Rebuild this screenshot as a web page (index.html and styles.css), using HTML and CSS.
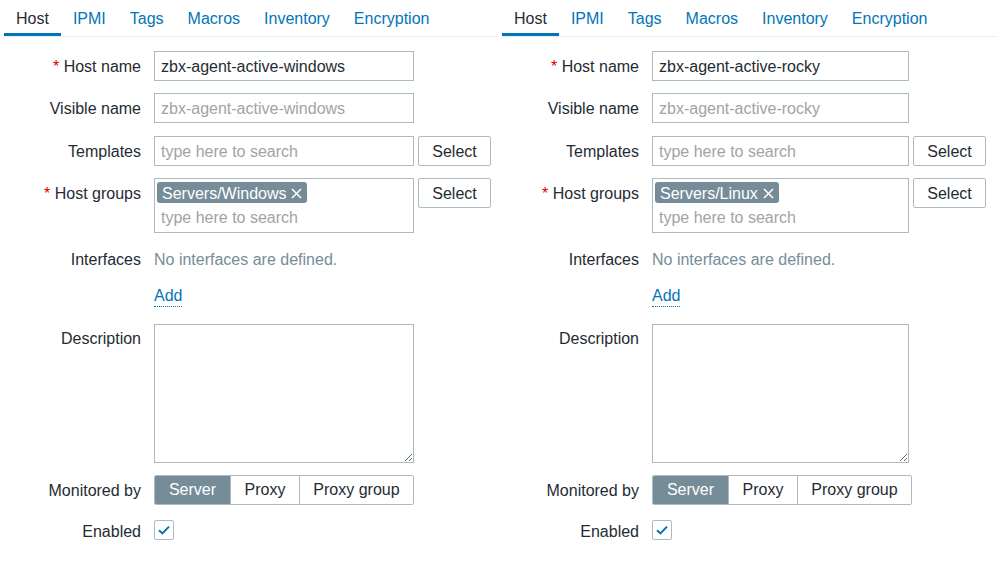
FILE: index.html
```html
<!DOCTYPE html>
<html lang="en">
<head>
<meta charset="utf-8">
<title>Host</title>
<link rel="stylesheet" href="styles.css">
</head>
<body>
<div class="page">
  <section class="panel">
    <nav class="tabs">
      <span class="tab tab--active">Host</span>
      <span class="tab">IPMI</span>
      <span class="tab">Tags</span>
      <span class="tab">Macros</span>
      <span class="tab">Inventory</span>
      <span class="tab">Encryption</span>
    </nav>
    <div class="form">
      <div class="row">
        <label class="label"><span class="req">*</span> Host name</label>
        <div class="field"><div class="input">zbx-agent-active-windows</div></div>
      </div>
      <div class="row">
        <label class="label">Visible name</label>
        <div class="field"><div class="input input--ph">zbx-agent-active-windows</div></div>
      </div>
      <div class="row row--tpl">
        <label class="label">Templates</label>
        <div class="field field--btn"><div class="input input--ph">type here to search</div><button class="btn">Select</button></div>
      </div>
      <div class="row">
        <label class="label"><span class="req">*</span> Host groups</label>
        <div class="field field--btn">
          <div class="multi">
            <span class="tag">Servers/Windows <svg class="tag-x" width="11" height="11" viewBox="0 0 11 11"><path d="M1 1L10 10M10 1L1 10" stroke="#fff" stroke-width="1.5"/></svg></span>
            <span class="multi-ph">type here to search</span>
          </div>
          <button class="btn">Select</button>
        </div>
      </div>
      <div class="row row--text">
        <label class="label">Interfaces</label>
        <div class="field"><span class="muted">No interfaces are defined.</span></div>
      </div>
      <div class="row row--link">
        <span class="label"></span>
        <div class="field"><span class="link">Add</span></div>
      </div>
      <div class="row row--desc">
        <label class="label">Description</label>
        <div class="field"><textarea class="textarea"></textarea></div>
      </div>
      <div class="row">
        <label class="label">Monitored by</label>
        <div class="field"><div class="seg"><span class="seg-item seg-item--on seg-server">Server</span><span class="seg-item seg-proxy">Proxy</span><span class="seg-item seg-group">Proxy group</span></div></div>
      </div>
      <div class="row row--check">
        <label class="label">Enabled</label>
        <div class="field"><span class="check"><svg width="14" height="12" viewBox="0 0 14 12"><path d="M2 6.2L5.4 9.4L12 2.6" fill="none" stroke="#0275b8" stroke-width="2"/></svg></span></div>
      </div>
    </div>
  </section>
  <section class="panel panel--narrow">
    <nav class="tabs">
      <span class="tab tab--active">Host</span>
      <span class="tab">IPMI</span>
      <span class="tab">Tags</span>
      <span class="tab">Macros</span>
      <span class="tab">Inventory</span>
      <span class="tab">Encryption</span>
    </nav>
    <div class="form">
      <div class="row">
        <label class="label"><span class="req">*</span> Host name</label>
        <div class="field"><div class="input">zbx-agent-active-rocky</div></div>
      </div>
      <div class="row">
        <label class="label">Visible name</label>
        <div class="field"><div class="input input--ph">zbx-agent-active-rocky</div></div>
      </div>
      <div class="row row--tpl">
        <label class="label">Templates</label>
        <div class="field field--btn"><div class="input input--ph">type here to search</div><button class="btn">Select</button></div>
      </div>
      <div class="row">
        <label class="label"><span class="req">*</span> Host groups</label>
        <div class="field field--btn">
          <div class="multi">
            <span class="tag">Servers/Linux <svg class="tag-x" width="11" height="11" viewBox="0 0 11 11"><path d="M1 1L10 10M10 1L1 10" stroke="#fff" stroke-width="1.5"/></svg></span>
            <span class="multi-ph">type here to search</span>
          </div>
          <button class="btn">Select</button>
        </div>
      </div>
      <div class="row row--text">
        <label class="label">Interfaces</label>
        <div class="field"><span class="muted">No interfaces are defined.</span></div>
      </div>
      <div class="row row--link">
        <span class="label"></span>
        <div class="field"><span class="link">Add</span></div>
      </div>
      <div class="row row--desc">
        <label class="label">Description</label>
        <div class="field"><textarea class="textarea"></textarea></div>
      </div>
      <div class="row">
        <label class="label">Monitored by</label>
        <div class="field"><div class="seg"><span class="seg-item seg-item--on seg-server">Server</span><span class="seg-item seg-proxy">Proxy</span><span class="seg-item seg-group">Proxy group</span></div></div>
      </div>
      <div class="row row--check">
        <label class="label">Enabled</label>
        <div class="field"><span class="check"><svg width="14" height="12" viewBox="0 0 14 12"><path d="M2 6.2L5.4 9.4L12 2.6" fill="none" stroke="#0275b8" stroke-width="2"/></svg></span></div>
      </div>
    </div>
  </section>
</div>
</body>
</html>
```

FILE: styles.css
```css
* { box-sizing: border-box; }
html, body {
  margin: 0;
  padding: 0;
  background: #ffffff;
}
body {
  font-family: "Liberation Sans", Arial, sans-serif;
  font-size: 16px;
  color: #1f2c33;
}
.page {
  display: flex;
  width: 996px;
  height: 562px;
  overflow: hidden;
}
.panel {
  --field-w: 260px;
  width: 498px;
  padding-left: 4px;
  flex: none;
}
.panel--narrow {
  --field-w: 257px;
}
.tabs {
  display: flex;
  height: 37px;
  border-bottom: 1px solid #ebeef0;
}
.tab {
  display: block;
  padding: 4px 12px 0;
  line-height: 29px;
  height: 36px;
  color: #0275b8;
  border-bottom: 3px solid transparent;
}
.tab--active {
  color: #1f2c33;
  border-bottom-color: #0275b8;
}
.form {
  display: flex;
  flex-direction: column;
  gap: 12px;
  padding-top: 14px;
}
.row {
  display: flex;
  align-items: flex-start;
  gap: 13px;
}
.row--tpl {
  margin-top: 1px;
}
.label {
  width: 137px;
  flex: none;
  text-align: right;
  padding-top: 1px;
  line-height: 29px;
  white-space: nowrap;
}
.req {
  color: #d40000;
}
.field {
  display: flex;
  gap: 4px;
  align-items: flex-start;
}
.input {
  width: var(--field-w);
  height: 30px;
  border: 1px solid #acbbc2;
  padding: 2px 6px 0;
  line-height: 26px;
  white-space: nowrap;
  overflow: hidden;
}
.input--ph {
  color: #a3a3a3;
}
.btn {
  width: 73px;
  height: 30px;
  border: 1px solid #acbbc2;
  border-radius: 2px;
  background: #ffffff;
  font: inherit;
  color: #1f2c33;
  padding: 2px 0 0;
}
.multi {
  width: var(--field-w);
  height: 55px;
  border: 1px solid #acbbc2;
  padding: 3px 2px 0;
  display: flex;
  flex-direction: column;
  align-items: flex-start;
}
.tag {
  display: inline-flex;
  align-items: center;
  gap: 5px;
  height: 21px;
  padding: 2px 5px 0;
  background: #768d99;
  color: #ffffff;
  border-radius: 3px;
  line-height: 19px;
  white-space: nowrap;
}
.tag-x {
  display: block;
  margin-top: -1px;
}
.multi-ph {
  color: #a3a3a3;
  padding-left: 4px;
  padding-top: 3px;
  line-height: 24px;
}
.row--text .field {
  padding-top: 1px;
  line-height: 29px;
}
.row--text {
  margin-top: -1px;
}
.muted {
  color: #768d99;
}
.row--link {
  margin-top: -6px;
}
.row--link .label {
  height: 30px;
}
.link {
  color: #0275b8;
  line-height: 29px;
  padding-top: 1px;
  display: inline-block;
  position: relative;
}
.link::after {
  content: "";
  position: absolute;
  left: 0;
  right: 0;
  bottom: 3px;
  border-bottom: 1px dotted #0275b8;
}
.row--desc {
  margin-top: 2px;
}
.row--desc .label {
  line-height: 28px;
}
.textarea {
  display: block;
  width: var(--field-w);
  height: 139px;
  border: 1px solid #acbbc2;
  border-radius: 0;
  margin: 0;
  padding: 4px 6px;
  font: inherit;
  resize: vertical;
  outline: none;
}
.seg {
  display: flex;
  height: 30px;
  border: 1px solid #acbbc2;
  border-radius: 2px;
  overflow: hidden;
}
.seg-item {
  display: block;
  line-height: 27px;
  text-align: center;
  border-left: 1px solid #acbbc2;
}
.seg-item:first-child {
  border-left: none;
}
.seg-item--on {
  background: #768d99;
  color: #ffffff;
}
.seg-server { width: 75px; }
.seg-proxy { width: 69px; }
.seg-group { width: 114px; }
.row--check {
  margin-top: 3px;
}
.row--check .label {
  line-height: 21px;
}
.check {
  display: flex;
  align-items: center;
  justify-content: center;
  width: 20px;
  height: 20px;
  border: 1px solid #acbbc2;
  border-radius: 2px;
}
```
